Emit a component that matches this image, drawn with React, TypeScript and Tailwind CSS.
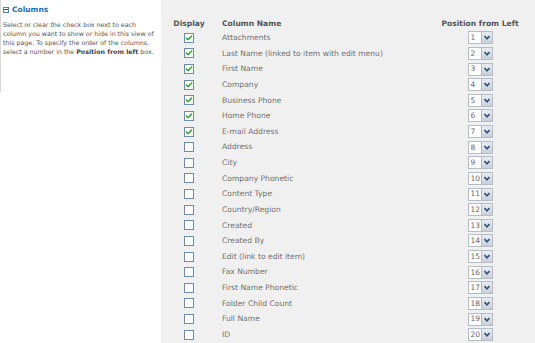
import { Check } from "lucide-react";

const columns = [
  { name: "Attachments", on: true },
  { name: "Last Name (linked to item with edit menu)", on: true },
  { name: "First Name", on: true },
  { name: "Company", on: true },
  { name: "Business Phone", on: true },
  { name: "Home Phone", on: true },
  { name: "E-mail Address", on: true },
  { name: "Address", on: false },
  { name: "City", on: false },
  { name: "Company Phonetic", on: false },
  { name: "Content Type", on: false },
  { name: "Country/Region", on: false },
  { name: "Created", on: false },
  { name: "Created By", on: false },
  { name: "Edit (link to edit item)", on: false },
  { name: "Fax Number", on: false },
  { name: "First Name Phonetic", on: false },
  { name: "Folder Child Count", on: false },
  { name: "Full Name", on: false },
  { name: "ID", on: false },
];

const Checkbox = ({ checked }: { checked: boolean }) => (
  <div className="w-[10px] h-[10px] border border-[#6e8bab] bg-white flex items-center justify-center">
    {checked && <Check className="w-[8px] h-[8px] text-[#21a121]" strokeWidth={4} />}
  </div>
);

const PositionSelect = ({ value }: { value: number }) => (
  <div className="flex h-[13px] border border-[#b4bcc7] bg-white">
    <div className="w-[12px] flex items-center pl-[2px] text-[7.5px] text-[#666]">{value}</div>
    <div className="w-[11px] flex items-center justify-center bg-gradient-to-b from-[#e9edf2] to-[#c9d0d9] border-l border-[#b4bcc7]">
      <svg width="6" height="5" viewBox="0 0 6 5">
        <path d="M0.5 1 L3 3.8 L5.5 1" fill="none" stroke="#34507a" strokeWidth="1.6" />
      </svg>
    </div>
  </div>
);

export default function App() {
  return (
    <div className="w-[535px] h-[343px] flex overflow-hidden bg-[#f0f0f0] font-['DejaVu_Sans',sans-serif]">
      {/* Left description panel */}
      <div className="w-[161px] h-full bg-white shrink-0">
        <div className="border-l border-[#d8d8d8] h-[92px] pl-[2px] pt-[4px]">
          <div className="flex items-center gap-[3px] text-[#0b72b5] font-bold text-[7.5px]">
            <div className="w-[6px] h-[6px] border border-[#5a7fa5] flex items-center justify-center">
              <div className="w-[4px] h-px bg-[#2b4f7a]" />
            </div>
            Columns
          </div>
          <div className="mt-[6px] text-[6.3px] leading-[8.8px] text-[#555] whitespace-nowrap">
            <div>Select or clear the check box next to each</div>
            <div>column you want to show or hide in this view of</div>
            <div>this page. To specify the order of the columns,</div>
            <div>
              select a number in the <b className="text-[#444]">Position from left</b> box.
            </div>
          </div>
        </div>
      </div>

      {/* Column table */}
      <div className="flex-1 pt-[17px]">
        <div className="flex h-[13px] items-center text-[7.6px] font-bold text-[#555]">
          <div className="w-[56px] text-center">Display</div>
          <div className="flex-1 pl-[5px]">Column Name</div>
          <div className="w-[96px] text-center pr-[14px]">Position from Left</div>
        </div>
        {columns.map((c, i) => (
          <div key={c.name} className="flex h-[15.63px] items-center text-[7.6px] text-[#707070]">
            <div className="w-[56px] flex justify-center">
              <Checkbox checked={c.on} />
            </div>
            <div className="flex-1 pl-[5px] whitespace-nowrap">{c.name}</div>
            <div className="w-[96px] flex justify-center pr-[14px]">
              <PositionSelect value={i + 1} />
            </div>
          </div>
        ))}
      </div>
    </div>
  );
}
